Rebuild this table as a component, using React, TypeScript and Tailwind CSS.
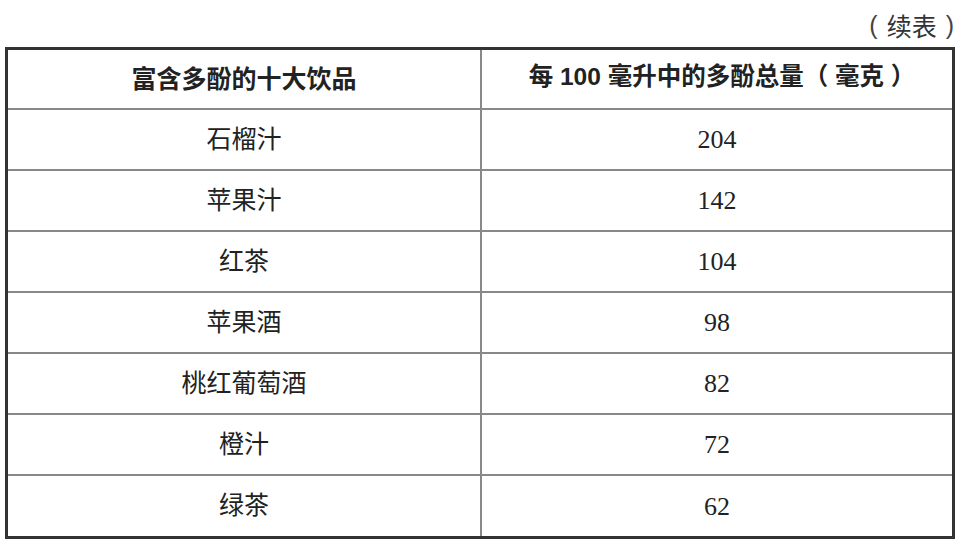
import React from "react";

const rows: [string, string][] = [
  ["石榴汁", "204"],
  ["苹果汁", "142"],
  ["红茶", "104"],
  ["苹果酒", "98"],
  ["桃红葡萄酒", "82"],
  ["橙汁", "72"],
  ["绿茶", "62"],
];

export default function App() {
  return (
    <div className="w-[960px] h-[542px] bg-white text-[#222] overflow-hidden">
      <div className="h-[47px] flex items-start justify-end pr-[6px] pt-[10px] text-[25px] leading-[30px] text-[#333] [font-family:'Noto_Sans_CJK_SC',sans-serif]">
        <div className="flex items-center gap-[9px]">
          <span className="[font-family:'Liberation_Sans',sans-serif] font-light text-[#444]">(</span>
          <span>续表</span>
          <span className="[font-family:'Liberation_Sans',sans-serif] font-light text-[#444]">)</span>
        </div>
      </div>
      <div className="ml-[5px] w-[950px] border-[3px] border-[#333] grid grid-cols-[474px_1fr]">
        <div className="h-[60px] border-b-2 border-r-2 border-[#888] flex items-center justify-center pb-[3px] text-[25px] font-bold [font-family:'Noto_Sans_CJK_SC',sans-serif]">
          富含多酚的十大饮品
        </div>
        <div className="h-[60px] border-b-2 border-[#888] flex items-center justify-center pb-[3px] pl-[10px] text-[24.5px] font-bold [font-family:'Liberation_Sans','Noto_Sans_CJK_SC',sans-serif]">
          每 100 毫升中的多酚总量（ 毫克 ）
        </div>
        {rows.map(([name, val], i) => {
          const last = i === rows.length - 1;
          return (
            <React.Fragment key={name}>
              <div
                className={
                  last
                    ? "h-[60px] border-r-2 border-[#888] flex items-center justify-center text-[25px] [font-family:'Liberation_Serif','Noto_Sans_CJK_SC',serif]"
                    : "h-[61px] border-b-2 border-r-2 border-[#888] flex items-center justify-center text-[25px] [font-family:'Liberation_Serif','Noto_Sans_CJK_SC',serif]"
                }
              >
                {name}
              </div>
              <div
                className={
                  last
                    ? "h-[60px] flex items-center justify-center text-[26px] [font-family:'Liberation_Serif',serif]"
                    : "h-[61px] border-b-2 border-[#888] flex items-center justify-center text-[26px] [font-family:'Liberation_Serif',serif]"
                }
              >
                {val}
              </div>
            </React.Fragment>
          );
        })}
      </div>
    </div>
  );
}
